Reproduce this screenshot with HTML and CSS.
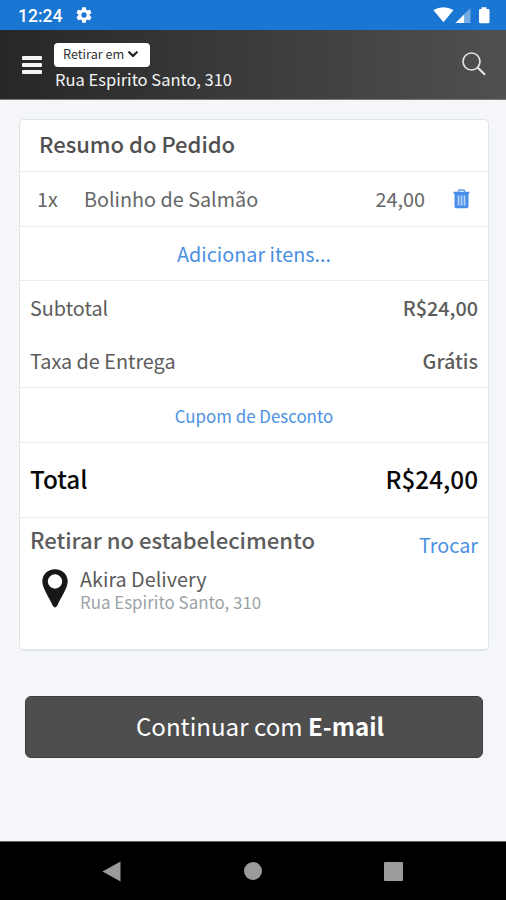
FILE: index.html
```html
<!DOCTYPE html>
<html lang="pt-BR">
<head>
<meta charset="utf-8">
<title>Resumo do Pedido</title>
<link rel="stylesheet" href="styles.css">
</head>
<body>
<div class="status">
  <span class="clock">12:24</span>
  <svg class="gear" viewBox="2 2 20 20" width="16" height="16"><path fill="#fff" d="M19.14 12.94c.04-.3.06-.61.06-.94s-.02-.64-.07-.94l2.03-1.58a.49.49 0 0 0 .12-.61l-1.92-3.32a.49.49 0 0 0-.59-.22l-2.39.96c-.5-.38-1.03-.7-1.62-.94l-.36-2.54a.48.48 0 0 0-.48-.41h-3.84a.48.48 0 0 0-.47.41l-.36 2.54c-.59.24-1.13.57-1.62.94l-2.39-.96a.48.48 0 0 0-.59.22L2.74 8.87a.48.48 0 0 0 .12.61l2.03 1.58c-.05.3-.09.63-.09.94s.02.64.07.94l-2.03 1.58a.49.49 0 0 0-.12.61l1.92 3.32c.12.22.37.29.59.22l2.39-.96c.5.38 1.03.7 1.62.94l.36 2.54c.05.24.24.41.48.41h3.84c.24 0 .44-.17.47-.41l.36-2.54c.59-.24 1.13-.56 1.62-.94l2.39.96c.22.08.47 0 .59-.22l1.92-3.32a.48.48 0 0 0-.12-.61zM12 15.3A3.3 3.3 0 1 1 12 8.700a3.3 3.3 0 0 1 0 6.600z"/></svg>
  <svg class="signals" width="58" height="18" viewBox="433 6 58 18"><path fill="#fff" d="M433.300 10Q443.500 4.500 453.500 10L443.500 22.300Z"/><path fill="#fff" d="M455.500 23L464.500 14V23Z"/><path fill="#75ace4" d="M464.500 14L470.500 8V23H464.500Z"/><path fill="#fff" d="M481.500 7.200H486.500V9H488.200Q489.500 9 489.500 10.200V22Q489.500 23.300 488.200 23.300H480.200Q479 23.300 479 22V10.200Q479 9 480.200 9H481.500Z"/></svg>
</div>
<header class="topbar">
  <div class="menu"><i></i><i></i><i></i></div>
  <div class="place">
    <div class="mode"><span>Retirar em</span><svg width="10" height="7" viewBox="0 0 10 7"><path d="M1.200 1.200L5 5L8.800 1.200" fill="none" stroke="#222" stroke-width="2.200" stroke-linecap="round" stroke-linejoin="round"/></svg></div>
    <div class="address">Rua Espirito Santo, 310</div>
  </div>
  <svg class="search" width="24" height="24" viewBox="0 0 24 24" fill="none" stroke="#e4e4e4"><circle cx="9.500" cy="9.500" r="8.500" stroke-width="1.700"/><path d="M15.700 15.500L23 22.700" stroke-width="2.200"/></svg>
</header>
<main class="page">
  <section class="card">
    <h1 class="row title">Resumo do Pedido</h1>
    <div class="row item">
      <span class="qty">1x</span><span class="name">Bolinho de Salmão</span><span class="price">24,00</span>
      <svg class="trash" width="17" height="20" viewBox="0 0 17 20"><path d="M5.500 3V1.700Q5.500 1 6.200 1H10.800Q11.500 1 11.500 1.700V3" fill="none" stroke="#5b9aec" stroke-width="1.300"/><path fill="#4a8de8" d="M.5 2.700H16.500V4.500H15.500V17.500Q15.500 19.300 13.700 19.300H3.300Q1.500 19.300 1.500 17.500V4.500H.5Z"/><path d="M5.500 6.500V16.500M8.500 6.500V16.500M11.500 6.500V16.500" stroke="#b5d4fa" stroke-width="1.700"/></svg>
    </div>
    <a class="row link add">Adicionar itens...</a>
    <div class="row costs">
      <div class="line"><span>Subtotal</span><b>R$24,00</b></div>
      <div class="line"><span>Taxa de Entrega</span><b>Grátis</b></div>
    </div>
    <a class="row link coupon">Cupom de Desconto</a>
    <div class="row total"><span>Total</span><span>R$24,00</span></div>
    <div class="pickup">
      <div class="line head"><h2>Retirar no estabelecimento</h2><a class="link change">Trocar</a></div>
      <div class="store">
        <svg width="26" height="39" viewBox="0 0 26 39"><path fill="#171717" fill-rule="evenodd" d="M13 .3C5.700.3.300 5.600.300 12.600C.300 19 7.500 29.500 10.700 36.500Q13 40.500 15.300 36.500C18.500 29.500 25.700 19 25.700 12.600C25.700 5.600 20.300.3 13 .3ZM13 5.300A7.200 7.200 0 1 1 13 19.700A7.200 7.200 0 0 1 13 5.300Z"/></svg>
        <div class="where"><div class="sname">Akira Delivery</div><div class="saddr">Rua Espirito Santo, 310</div></div>
      </div>
    </div>
  </section>
  <button class="cta"><span>Continuar com <b>E-mail</b></span></button>
</main>
<nav class="navbar">
  <svg width="19" height="21" viewBox="0 0 19 21"><path fill="#9b9b9b" d="M18.500.5V20.500L.5 10.500Z"/></svg>
  <i class="home"></i>
  <i class="recent"></i>
</nav>
</body>
</html>
```
FILE: styles.css
```css
* { box-sizing: border-box; }
body {
  margin: 0;
  height: 900px;
  display: flex;
  flex-direction: column;
  background: #f4f6fa;
  color: #5c5c5c;
  font-family: "Noto Sans CJK SC", "Noto Sans", sans-serif;
  font-size: 19.800px;
  line-height: 28px;
  white-space: nowrap;
  overflow: hidden;
}
svg { display: block; flex: none; }
h1, h2 { margin: 0; font-weight: 500; }
b { font-weight: 500; }

.status { height: 30px; display: flex; align-items: center; background: #1976d2; padding: 0 15px 0 18px; }
.clock { font: 500 17.500px/30px Roboto, sans-serif; color: #fff; width: 58px; padding-top: 2px; }
.signals { margin-left: auto; }

.topbar { height: 70px; display: flex; padding: 0 20px 0 22px; background: linear-gradient(90deg, #272727, #505050); border-bottom: 1px solid #777; }
.menu { width: 20px; margin-top: 26px; display: flex; flex-direction: column; gap: 3px; }
.menu i { height: 4px; border-radius: 1px; background: #f5f5f5; }
.place { margin: 13px 0 0 12px; }
.mode { width: 96px; height: 24px; display: flex; align-items: center; gap: 4px; padding: 0 9px 2px; background: #fff; border-radius: 4px; color: #333; font-size: 12.700px; line-height: 22px; }
.address { padding-left: 1px; color: #f4f4f4; font-size: 16.500px; line-height: 24px; }
.search { margin: 22px 0 0 auto; }

.page { flex: 1; padding: 19px 17px 0 19px; }
.card { height: 532px; background: #fff; border: 1px solid #e2e5e8; border-bottom-width: 2px; border-radius: 5px; }
.row { display: flex; align-items: center; border-bottom: 1px solid #ebeced; }
.title { height: 52px; padding: 0 0 5px 19px; font-size: 22px; color: #505050; }
.item { height: 54.500px; padding: 1px 18px 0 17px; color: #666; }
.qty { width: 47px; }
.price { margin-left: auto; margin-right: 28px; }
.link { color: #4a90e2; justify-content: center; }
.add { height: 54.500px; padding-top: 2px; }
.costs { height: 107px; display: block; padding: 0 10px; }
.line { display: flex; justify-content: space-between; align-items: center; height: 53px; }
.coupon { height: 54.500px; padding-top: 2px; font-size: 16.900px; }
.total { height: 75px; padding: 0 10px 1px; justify-content: space-between; color: #080808; font-size: 24.300px; font-weight: 500; }
.pickup { padding: 0 10px; }
.head { height: 47px; align-items: flex-start; }
.head h2 { font-size: 22.100px; line-height: 43px; }
.change { line-height: 53px; }
.store { display: flex; padding: 4px 0 0 12px; }
.where { margin: -1px 0 0 12px; }
.sname { line-height: 22px; }
.saddr { color: #9aa3a8; font-size: 16.900px; line-height: 24px; }
.cta { display: flex; width: 458px; height: 62px; margin: 45px 0 0 6px; padding: 0 0 3px 12px; align-items: center; justify-content: center; border: 1px solid #3d3d3d; border-radius: 6px; background: #4e4e4e; color: #fff; font: 400 24.100px/36px "Noto Sans CJK SC", sans-serif; }
.cta b { font-weight: 700; }

.navbar { height: 59px; display: flex; align-items: center; padding: 0 103px 0 102px; justify-content: space-between; background: #000; border-top: 1px solid #666; }
.home { width: 18px; height: 18px; border-radius: 50%; background: #9b9b9b; }
.recent { width: 19px; height: 19px; border-radius: 1px; background: #9b9b9b; }
```
